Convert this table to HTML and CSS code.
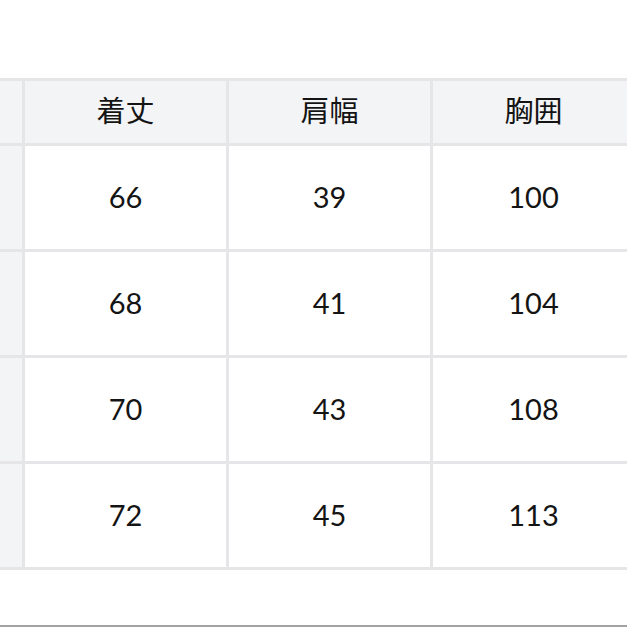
FILE: index.html
```html
<!DOCTYPE html>
<html lang="ja">
<head>
<meta charset="utf-8">
<link rel="stylesheet" href="styles.css">
</head>
<body>
<div class="page">
  <div class="size-table">
    <div class="cell head side"></div>
    <div class="cell head">着丈</div>
    <div class="cell head">肩幅</div>
    <div class="cell head">胸囲</div>

    <div class="cell side"></div>
    <div class="cell">66</div>
    <div class="cell">39</div>
    <div class="cell">100</div>

    <div class="cell side"></div>
    <div class="cell">68</div>
    <div class="cell">41</div>
    <div class="cell">104</div>

    <div class="cell side"></div>
    <div class="cell">70</div>
    <div class="cell">43</div>
    <div class="cell">108</div>

    <div class="cell side"></div>
    <div class="cell">72</div>
    <div class="cell">45</div>
    <div class="cell">113</div>
  </div>
  <div class="bottom-line"></div>
</div>
</body>
</html>
```

FILE: styles.css
```css
html, body {
  margin: 0;
  padding: 0;
  background: #ffffff;
  overflow: hidden;
}

.page {
  width: 627px;
  height: 627px;
  overflow: hidden;
  display: flex;
  flex-direction: column;
}

.size-table {
  margin-top: 78px;
  margin-left: -182px;
  display: grid;
  grid-template-columns: 201px 201px 201px 201px;
  grid-template-rows: 62px 103px 103px 103px 103px;
  gap: 3px;
  padding: 3px;
  background: #e6e6e8;
  width: max-content;
  font-family: Lato, "Noto Sans CJK JP", sans-serif;
  color: #141414;
}

.cell {
  background: #ffffff;
  display: flex;
  align-items: center;
  justify-content: center;
  font-size: 29px;
  color: #141414;
  padding-bottom: 3px;
  box-sizing: border-box;
}

.cell.head {
  background: #f3f4f6;
  font-family: "Noto Sans CJK JP", sans-serif;
  font-size: 29px;
  font-weight: 400;
  padding-bottom: 6px;
}

.cell.side {
  background: #f3f4f6;
}

.bottom-line {
  margin-top: auto;
  height: 2px;
  background: #a3a3a3;
}
```
